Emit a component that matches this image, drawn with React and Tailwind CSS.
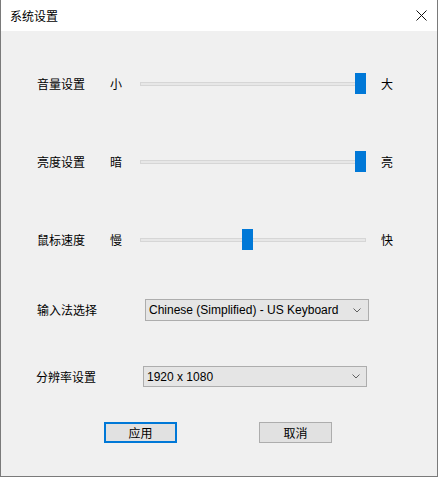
import React from "react";

const cjk = { fontFamily: '"Noto Sans CJK SC", "Noto Sans", sans-serif' };
const latin = { fontFamily: '"Liberation Sans", "Noto Sans CJK SC", sans-serif' };

function Slider({ left, label, lo, hi, mt }) {
  return (
    <div className={`flex items-center h-[21px] pl-[36px] ${mt}`}>
      <div className="w-[73px] text-[12px] text-black leading-none">{label}</div>
      <div className="w-[30px] text-[12px] text-black leading-none">{lo}</div>
      <div className="relative w-[226px] h-[21px]">
        <div className="absolute left-0 right-0 top-[9px] h-[4px] bg-[#e7e7e7] border border-[#d6d6d6]" />
        <div className="absolute top-0 w-[11px] h-[21px] bg-[#0078d7]" style={{ left }} />
      </div>
      <div className="ml-[15px] text-[12px] text-black leading-none">{hi}</div>
    </div>
  );
}

function Chevron() {
  return (
    <svg width="8" height="5" viewBox="0 0 8 5" className="shrink-0">
      <polyline points="0.5,0.5 4,4 7.5,0.5" fill="none" stroke="#606060" strokeWidth="1" />
    </svg>
  );
}

function SelectRow({ label, value, boxClass, mt }) {
  return (
    <div className={`flex items-center pl-[35px] ${mt}`}>
      <div className="text-[12px] text-black leading-none w-[107px] shrink-0">{label}</div>
      <div className={`flex items-center justify-between h-[22px] bg-[#e5e5e5] border border-[#adadad] pl-[3px] pr-[7px] ${boxClass}`}>
        <span className="text-[12px] text-black leading-none" style={latin}>{value}</span>
        <Chevron />
      </div>
    </div>
  );
}

export default function App() {
  return (
    <div className="w-[438px] h-[477px] bg-[#f0f0f0] border-l border-r border-b border-[#7a7a7a] flex flex-col" style={cjk}>
      <div className="h-[31px] bg-white flex items-center justify-between pl-[9px] pr-[10px] shrink-0">
        <span className="text-[12px] text-black leading-none">系统设置</span>
        <svg width="11" height="11" viewBox="0 0 11 11">
          <path d="M0.5 0.5 L10.5 10.5 M10.5 0.5 L0.5 10.5" stroke="#111" strokeWidth="1" />
        </svg>
      </div>
      <Slider label="音量设置" lo="小" hi="大" left="215px" mt="mt-[42px]" />
      <Slider label="亮度设置" lo="暗" hi="亮" left="215px" mt="mt-[57px]" />
      <Slider label="鼠标速度" lo="慢" hi="快" left="102px" mt="mt-[57px]" />
      <div className="flex items-center pl-[36px] mt-[49px]">
        <div className="text-[12px] text-black leading-none w-[108px] shrink-0">输入法选择</div>
        <div className="flex items-center justify-between w-[224px] h-[22px] bg-[#e5e5e5] border border-[#adadad] pl-[3px] pr-[7px]">
          <span className="text-[12px] text-black leading-none" style={latin}>Chinese (Simplified) - US Keyboard</span>
          <Chevron />
        </div>
      </div>
      <div className="flex items-center pl-[35px] mt-[45px]">
        <div className="text-[12px] text-black leading-none w-[107px] shrink-0">分辨率设置</div>
        <div className="flex items-center justify-between w-[224px] h-[21px] bg-[#e5e5e5] border border-[#adadad] pl-[3px] pr-[6px]">
          <span className="text-[12px] text-black leading-none" style={latin}>1920 x 1080</span>
          <Chevron />
        </div>
      </div>
      <div className="flex items-center pl-[103px] mt-[35px]">
        <button className="w-[73px] h-[21px] bg-[#e1e1e1] border-2 border-[#0078d7] text-[12px] text-black leading-none flex items-center justify-center">应用</button>
        <button className="ml-[82px] w-[73px] h-[21px] bg-[#e1e1e1] border border-[#adadad] text-[12px] text-black leading-none flex items-center justify-center">取消</button>
      </div>
    </div>
  );
}
